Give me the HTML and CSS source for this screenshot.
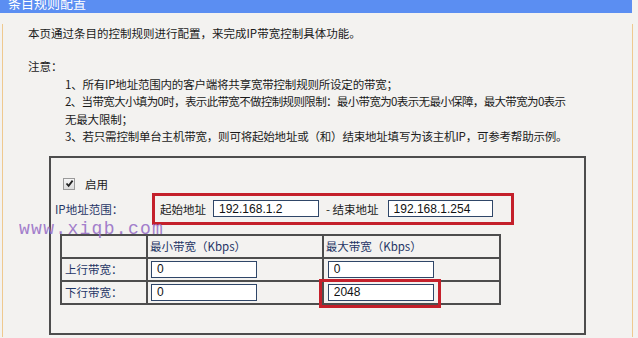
FILE: index.html
```html
<!DOCTYPE html>
<html lang="zh-CN">
<head>
<meta charset="utf-8">
<link rel="stylesheet" href="styles.css">
</head>
<body>
<div class="title_bar"><span>条目规则配置</span></div>
<div class="panel">
    <p class="intro">本页通过条目的控制规则进行配置，来完成IP带宽控制具体功能。</p>
    <p class="note_head">注意：</p>
    <div class="note_list">
        <div>1、所有IP地址范围内的客户端将共享宽带控制规则所设定的带宽；</div>
        <div class="tight">2、当带宽大小填为0时，表示此带宽不做控制规则限制：最小带宽为0表示无最小保障，最大带宽为0表示</div>
        <div>无最大限制；</div>
        <div>3、若只需控制单台主机带宽，则可将起始地址或（和）结束地址填写为该主机IP，可参考帮助示例。</div>
    </div>

    <div class="rule_box">
        <div class="enable_row">
            <span class="check">
                <svg width="9" height="9" viewBox="0 0 9 9"><path d="M1.5 4.5 L3.6 6.8 L7.6 1.6" fill="none" stroke="#222" stroke-width="1.8"/></svg>
            </span>
            <span>启用</span>
        </div>
        <div class="ip_row">
            <span class="ip_label">IP地址范围：</span>
            <div class="ip_range">
                <span>起始地址</span>
                <input class="txt" type="text" value="192.168.1.2">
                <span class="dash">- 结束地址</span>
                <input class="txt end_ip" type="text" value="192.168.1.254">
            </div>
        </div>
        <table class="bw_table">
            <tr>
                <th class="col_label"></th>
                <th>最小带宽（Kbps）</th>
                <th>最大带宽（Kbps）</th>
            </tr>
            <tr>
                <td class="col_label">上行带宽：</td>
                <td><input class="txt" type="text" value="0"></td>
                <td class="col_max"><input class="txt" type="text" value="0"></td>
            </tr>
            <tr>
                <td class="col_label">下行带宽：</td>
                <td><input class="txt" type="text" value="0"></td>
                <td class="col_max"><input class="txt" type="text" value="2048"><span class="mark"></span></td>
            </tr>
        </table>
        <div class="watermark">www.xiqb.com</div>
    </div>
</div>
</body>
</html>
```

FILE: styles.css
```css
body {margin:0; background:#f3f2f0; font-family:"Noto Sans CJK SC", sans-serif; font-size:11.5px; color:#1b1b1b;}
p {margin:0;}

.title_bar {width:632px; height:13px; overflow:hidden; background:#5b8ef2; color:#fff; font-size:13px;}
.title_bar span {display:block; line-height:13px; margin-top:-4px; padding-left:8px;}

.panel {margin-left:2px; width:629px; border-left:1px solid #efc98f; border-right:1px solid #efc98f; padding-bottom:2px;}

.intro {line-height:18px; margin-top:11px; padding-left:25px;}
.note_head {line-height:17.5px; margin-top:16px; padding-left:25px;}
.note_list {line-height:17.5px; padding-left:62px; white-space:nowrap; letter-spacing:-0.2px;}
.note_list .tight {letter-spacing:-0.65px;}

.rule_box {position:relative; margin:10px 0 0 46px; border:2px solid #4d4d4d; padding:17px 0 28px 4px; box-sizing:border-box; width:537px;}

.enable_row {display:flex; align-items:center; height:18px; margin-left:8px; gap:10px;}
.check {display:flex; align-items:center; justify-content:center; width:10px; height:10px; border:1px solid #9a9a9a; background:linear-gradient(#f6f6f6,#dcdcdc);}

.ip_row {display:flex; align-items:center;}
.ip_label {width:97px; color:#1f3566;}
.ip_range {display:flex; align-items:center; height:26px; border:3px solid #c4202b; padding:0 10px 0 5px; width:341px;}
.ip_range .txt {margin-left:7px; width:106px;}
.ip_range .dash {margin-left:7px;}
.ip_range .end_ip {margin-left:9px; width:105px;}

.txt {box-sizing:border-box; width:106px; height:17px; border:1px solid #2f4668; background:#fff; font-family:"Liberation Sans", Arial, sans-serif; font-size:12px; color:#111; padding:0 0 0 5px; margin:0; outline:none;}

.bw_table {border-collapse:collapse; margin:9px 0 0 5px; width:441px; color:#1f3566;}
.bw_table th, .bw_table td {border:2px solid #4d4d4d; height:21px; padding:0 0 0 2px; text-align:left; font-weight:normal; white-space:nowrap;}
.bw_table .col_label {width:81px;}
.bw_table td {padding-left:3px;}
.bw_table .col_max {position:relative; padding-left:4px;}

.mark {position:absolute; left:-5px; top:-3px; width:116px; height:23px; border:3px solid #c4202b;}

.watermark {position:absolute; left:-32px; top:64px; font-family:"Liberation Mono", monospace; font-size:18px; letter-spacing:1.3px; line-height:14px; color:#9a72c8; opacity:0.9;}
```
